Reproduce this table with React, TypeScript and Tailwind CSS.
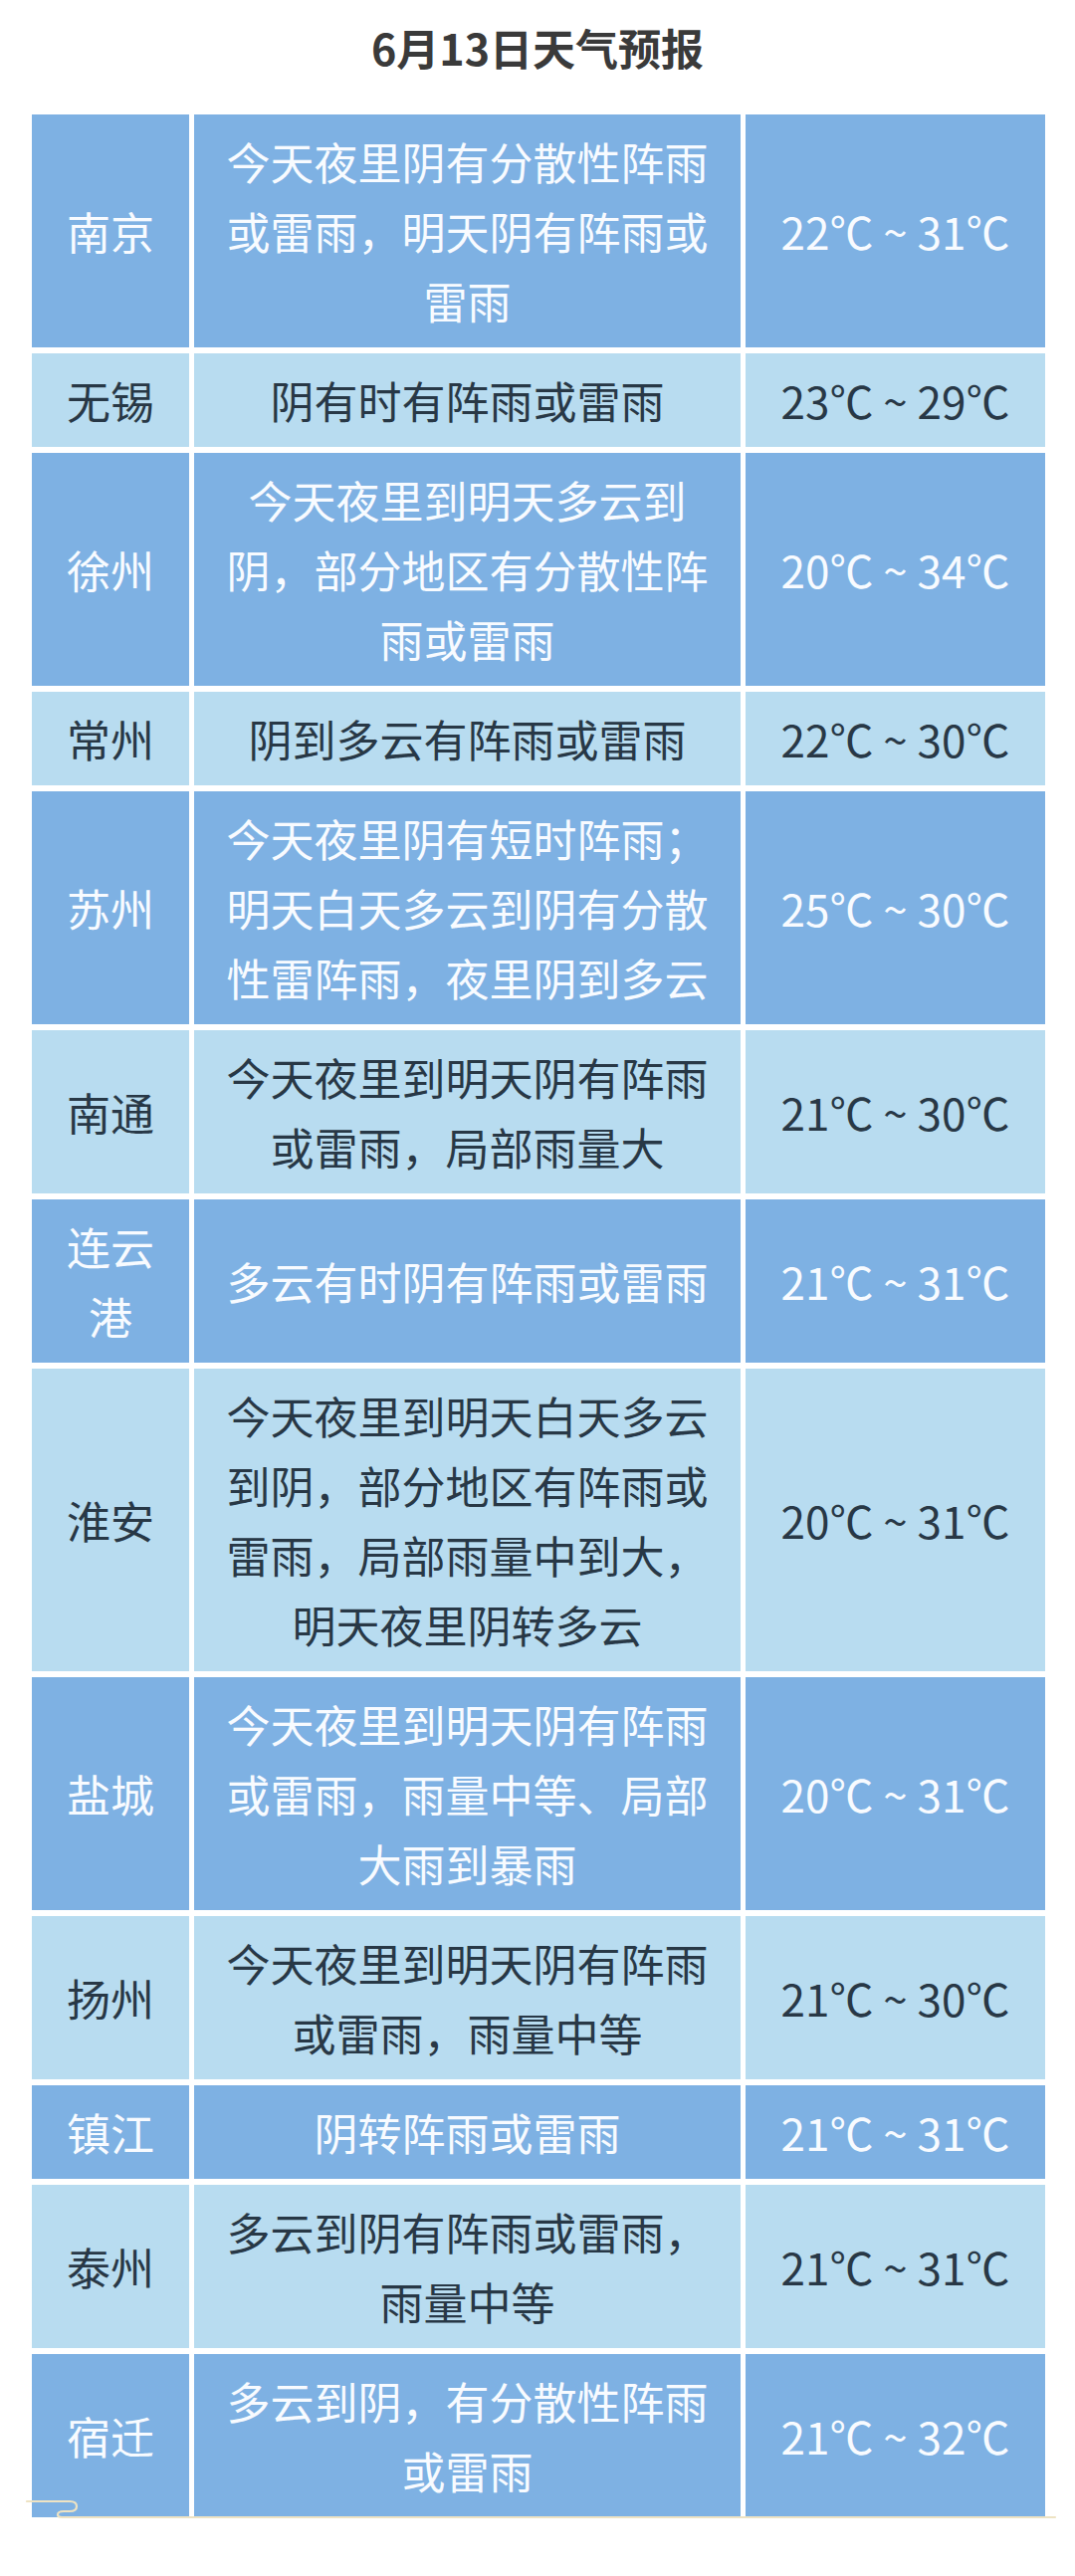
import React from "react";

type Row = { city: string[]; desc: string[]; temp: string; dark: boolean };

const rows: Row[] = [
  { city: ["南京"], desc: ["今天夜里阴有分散性阵雨", "或雷雨，明天阴有阵雨或", "雷雨"], temp: "22℃ ~ 31℃", dark: true },
  { city: ["无锡"], desc: ["阴有时有阵雨或雷雨"], temp: "23℃ ~ 29℃", dark: false },
  { city: ["徐州"], desc: ["今天夜里到明天多云到", "阴，部分地区有分散性阵", "雨或雷雨"], temp: "20℃ ~ 34℃", dark: true },
  { city: ["常州"], desc: ["阴到多云有阵雨或雷雨"], temp: "22℃ ~ 30℃", dark: false },
  { city: ["苏州"], desc: ["今天夜里阴有短时阵雨；", "明天白天多云到阴有分散", "性雷阵雨，夜里阴到多云"], temp: "25℃ ~ 30℃", dark: true },
  { city: ["南通"], desc: ["今天夜里到明天阴有阵雨", "或雷雨，局部雨量大"], temp: "21℃ ~ 30℃", dark: false },
  { city: ["连云", "港"], desc: ["多云有时阴有阵雨或雷雨"], temp: "21℃ ~ 31℃", dark: true },
  { city: ["淮安"], desc: ["今天夜里到明天白天多云", "到阴，部分地区有阵雨或", "雷雨，局部雨量中到大，", "明天夜里阴转多云"], temp: "20℃ ~ 31℃", dark: false },
  { city: ["盐城"], desc: ["今天夜里到明天阴有阵雨", "或雷雨，雨量中等、局部", "大雨到暴雨"], temp: "20℃ ~ 31℃", dark: true },
  { city: ["扬州"], desc: ["今天夜里到明天阴有阵雨", "或雷雨，雨量中等"], temp: "21℃ ~ 30℃", dark: false },
  { city: ["镇江"], desc: ["阴转阵雨或雷雨"], temp: "21℃ ~ 31℃", dark: true },
  { city: ["泰州"], desc: ["多云到阴有阵雨或雷雨，", "雨量中等"], temp: "21℃ ~ 31℃", dark: false },
  { city: ["宿迁"], desc: ["多云到阴，有分散性阵雨", "或雷雨"], temp: "21℃ ~ 32℃", dark: true },
];

function Lines({ lines }: { lines: string[] }) {
  return (
    <div className="flex flex-col items-center">
      {lines.map((l, i) => (
        <span key={i} className="block whitespace-nowrap">
          {l}
        </span>
      ))}
    </div>
  );
}

export default function App() {
  return (
    <div
      className="w-[1080px] min-h-[2588px] bg-white"
      style={{ fontFamily: '"Noto Sans CJK SC", "Noto Sans", sans-serif' }}
    >
      <h1 className="pt-[18px] text-center text-[43px] font-bold leading-[58px] text-[#3a3a3a]">
        6月13日天气预报
      </h1>
      <div className="relative ml-[32px] mt-[39px] flex w-[1018px] flex-col gap-y-[6px]">
        {rows.map((r, i) => {
          const cell = r.dark
            ? "bg-[#7eb1e3] text-[#f8fbff]"
            : "bg-[#b8dcf0] text-[#283846]";
          return (
            <div
              key={i}
              className="grid grid-cols-[158px_549px_301px] gap-x-[5px] text-[44px] leading-[70px]"
            >
              <div className={`flex items-center justify-center py-[12px] text-center ${cell}`}>
                <Lines lines={r.city} />
              </div>
              <div className={`flex items-center justify-center py-[12px] text-center ${cell}`}>
                <Lines lines={r.desc} />
              </div>
              <div className={`flex items-center justify-center py-[12px] text-center ${cell}`}>
                <span className="whitespace-nowrap">{r.temp}</span>
              </div>
            </div>
          );
        })}
        <svg
          className="pointer-events-none absolute bottom-[-3px] left-[-6px]"
          width="1040"
          height="22"
          viewBox="0 0 1040 22"
          fill="none"
        >
          <path
            d="M1 3 H44 Q51 3 51 8 Q51 13 44 13 H38 Q32 13 32 16.5 Q32 19 36 19 H1034"
            stroke="#eee3c3"
            strokeWidth="2.2"
            strokeLinecap="round"
          />
        </svg>
      </div>
    </div>
  );
}
